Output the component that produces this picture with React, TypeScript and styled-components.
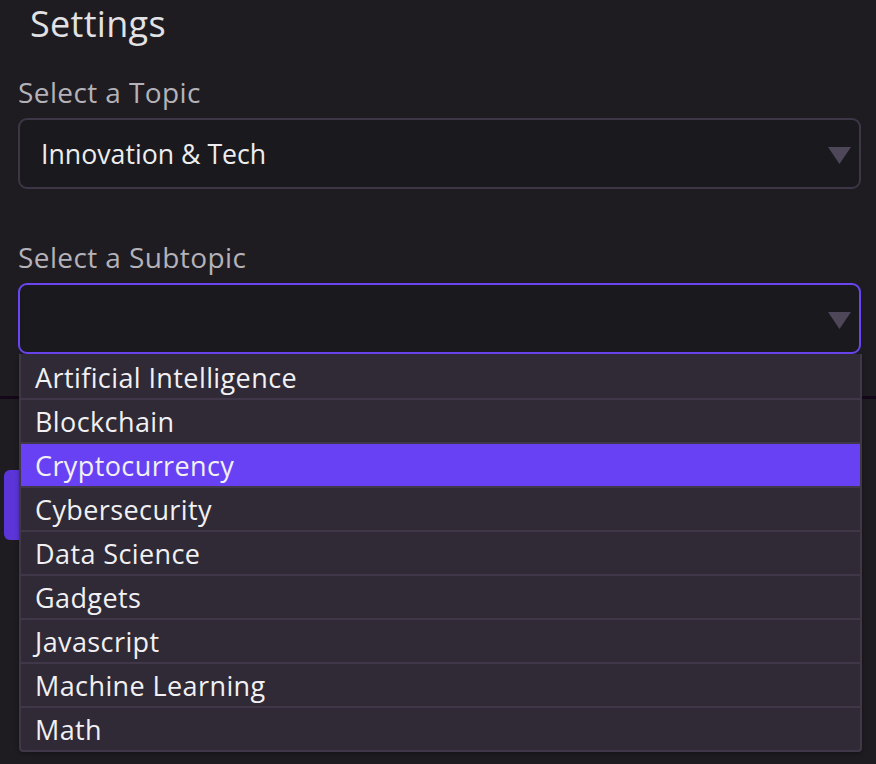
import styled, { createGlobalStyle } from "styled-components";

const GlobalStyle = createGlobalStyle`
  html, body {
    margin: 0;
    padding: 0;
    background: #1e1c21;
    height: 100%;
    overflow: hidden;
  }
  body {
    font-family: "Open Sans", "Noto Sans", sans-serif;
  }
`;

const Page = styled.div`
  width: 876px;
  height: 764px;
  background: #1e1c21;
  overflow: hidden;
`;

const Panel = styled.div`
  padding: 0 15px 0 18px;
`;

const Title = styled.h1`
  margin: 0 0 0 12px;
  padding-top: 3px;
  font-size: 36px;
  line-height: 41px;
  font-weight: 400;
  letter-spacing: 0.3px;
  color: #e2e2e4;
`;

const Field = styled.div<{ $top: number }>`
  margin-top: ${(p) => p.$top}px;
`;

const Label = styled.div`
  font-size: 28px;
  line-height: 34px;
  letter-spacing: 0.4px;
  color: #b4b2b8;
  margin-bottom: 9px;
`;

const SelectWrap = styled.div`
  position: relative;
`;

const SelectBox = styled.div<{ $focused?: boolean }>`
  height: 71px;
  box-sizing: border-box;
  border: ${(p) => (p.$focused ? "2px solid #6a45f0" : "2px solid #3d3647")};
  border-radius: 9px;
  background: #1a191d;
  display: flex;
  align-items: center;
  justify-content: space-between;
  padding: 0 8px 0 21px;
  font-size: 26.7px;
  color: #ededef;
`;

const Arrow = styled.svg`
  width: 23px;
  height: 17px;
  margin-top: 4px;
`;

const Menu = styled.ul`
  position: absolute;
  top: 100%;
  left: 1px;
  right: -1px;
  margin: 0;
  padding: 0;
  list-style: none;
  background: #2f2a36;
  border: 2px solid #403848;
  border-top: none;
  border-radius: 0 0 4px 4px;
  box-shadow: 0 2px 4px rgba(0, 0, 0, 0.3);
  z-index: 5;
`;

const Option = styled.li<{ $active?: boolean }>`
  height: 44px;
  box-sizing: border-box;
  padding: 0 14px;
  display: flex;
  align-items: center;
  font-size: 27px;
  letter-spacing: 0.4px;
  color: #f1f0f3;
  background: ${(p) => (p.$active ? "#6941f5" : "transparent")};
  border-top: 2px solid #403848;
  &:first-child {
    border-top-color: #2f2a36;
  }
`;

const Divider = styled.div`
  height: 3px;
  background: #140818;
  margin-top: 42px;
`;

const Actions = styled.div`
  padding: 71px 0 0 4px;
`;

const SaveButton = styled.button`
  display: block;
  width: 300px;
  height: 70px;
  border: none;
  border-radius: 6px;
  background: #5b35d8;
`;

const subtopics = [
  "Artificial Intelligence",
  "Blockchain",
  "Cryptocurrency",
  "Cybersecurity",
  "Data Science",
  "Gadgets",
  "Javascript",
  "Machine Learning",
  "Math",
];

const Caret = () => (
  <Arrow viewBox="0 0 23 17">
    <polygon points="0,0 23,0 11.5,17" fill="#4e4659" />
  </Arrow>
);

export default function App() {
  return (
    <Page>
      <GlobalStyle />
      <Panel>
        <Title>Settings</Title>
        <Field $top={31}>
          <Label>Select a Topic</Label>
          <SelectWrap>
            <SelectBox>
              <span>Innovation &amp; Tech</span>
              <Caret />
            </SelectBox>
          </SelectWrap>
        </Field>
        <Field $top={51}>
          <Label>Select a Subtopic</Label>
          <SelectWrap>
            <SelectBox $focused>
              <span />
              <Caret />
            </SelectBox>
            <Menu>
              {subtopics.map((s) => (
                <Option key={s} $active={s === "Cryptocurrency"}>
                  {s}
                </Option>
              ))}
            </Menu>
          </SelectWrap>
        </Field>
      </Panel>
      <Divider />
      <Actions>
        <SaveButton aria-label="Save" />
      </Actions>
    </Page>
  );
}
